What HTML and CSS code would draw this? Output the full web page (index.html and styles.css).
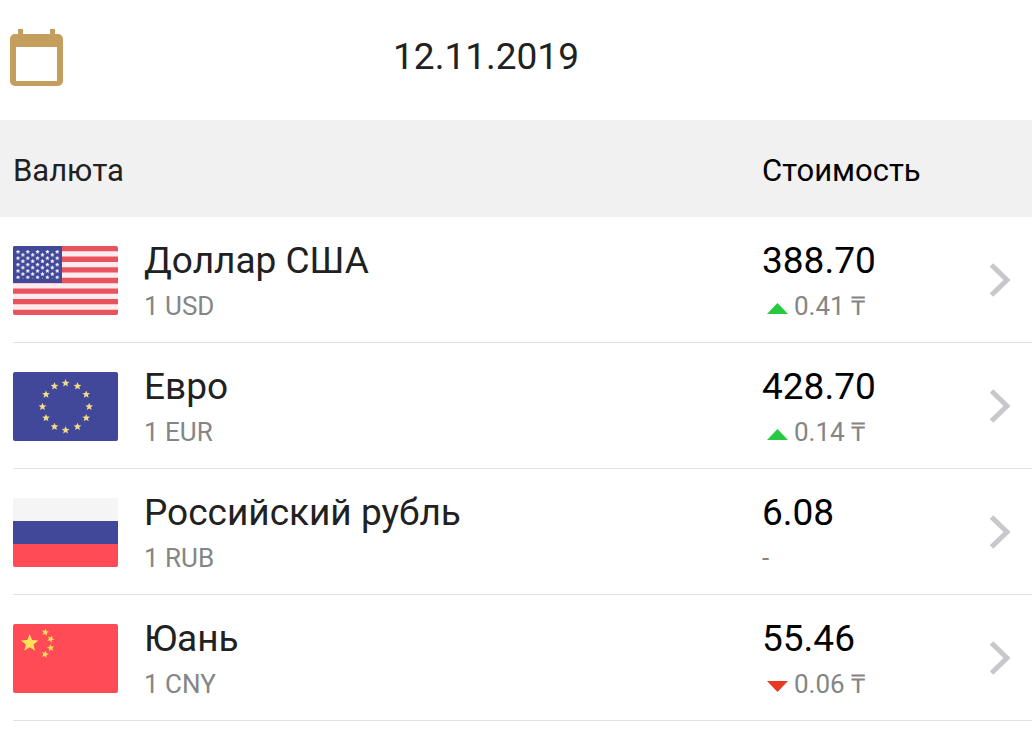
FILE: index.html
```html
<!DOCTYPE html>
<html lang="ru">
<head>
  <meta charset="UTF-8" />
  <meta name="viewport" content="width=device-width, initial-scale=1.0"/>
  <title>12.11.2019</title>
  <link rel="stylesheet" href="styles.css">
</head>
<body>

  <!-- shared shapes -->
  <svg class="defs" aria-hidden="true">
    <defs>
      <path id="star" d="M0-10 2.6-3.5 9.5-3.1 4.1 1.3 5.9 8.1 0 4.3-5.9 8.1-4.1 1.3-9.5-3.1-2.6-3.5z"/>
      <pattern id="usStars" x="2.6" y="4.1" width="9.8" height="6.4" patternUnits="userSpaceOnUse">
        <use href="#star" transform="translate(2.4 1.6) scale(.24)" fill="#fff"/>
        <use href="#star" transform="translate(7.3 4.8) scale(.24)" fill="#fff"/>
      </pattern>
    </defs>
  </svg>

  <!-- DATE BAR -->
  <header class="topbar">
    <button class="calendar" type="button" aria-label="Календарь">
      <svg width="53" height="58" viewBox="0 0 53 58">
        <path fill="#c49e5c" fill-rule="evenodd" d="M8 0h5v5h27V0h5v5h3a5 5 0 0 1 5 5v42a5 5 0 0 1-5 5H5a5 5 0 0 1-5-5V10a5 5 0 0 1 5-5h3zM6 18v34h41V18z"/>
      </svg>
    </button>
    <h1 class="date">12.11.2019</h1>
  </header>

  <!-- RATES -->
  <main class="rates-wrap">
    <table class="rates">
      <thead>
        <tr>
          <th class="first" colspan="2" scope="col">Валюта</th>
          <th class="cost-head" colspan="2" scope="col">Стоимость</th>
        </tr>
      </thead>
      <tbody>
        <tr>
          <td class="flag-cell">
            <svg class="flag" viewBox="0 0 105 69" aria-hidden="true">
              <rect width="105" height="69" fill="#ffecee"/>
              <path stroke="#e9535e" stroke-width="5.3" d="M0 2.65h105M0 13.25h105M0 23.9h105M0 34.5h105M0 45.1h105M0 55.7h105M0 66.35h105"/>
              <rect width="49" height="37" fill="#414799"/>
              <rect x="2.6" y="4.1" width="44.1" height="28.8" fill="url(#usStars)"/>
            </svg>
          </td>
          <td class="name-cell">
            <div class="name">Доллар США</div>
            <div class="sub">1 USD</div>
          </td>
          <td class="cost-cell">
            <div class="cost">388.70</div>
            <div class="sub"><svg class="arrow up" viewBox="0 0 21 11"><path d="M0 11 10.5 0 21 11z"/></svg>0.41 ₸</div>
          </td>
          <td class="more-cell">
            <a href="#usd" aria-label="Доллар США"><svg class="chevron" viewBox="0 0 22 34"><path d="M2.5 2 18 17 2.5 32"/></svg></a>
          </td>
        </tr>
        <tr>
          <td class="flag-cell">
            <svg class="flag" viewBox="0 0 105 69" aria-hidden="true">
              <rect width="105" height="69" fill="#414799"/>
              <g fill="#f3dc84">
                <use href="#star" transform="translate(52.6 11.2) scale(.41)"/>
                <use href="#star" transform="translate(64.5 14.2) scale(.41)"/>
                <use href="#star" transform="translate(73.2 22.5) scale(.41)"/>
                <use href="#star" transform="translate(76.2 34.8) scale(.41)"/>
                <use href="#star" transform="translate(73.2 46) scale(.41)"/>
                <use href="#star" transform="translate(64.5 54.8) scale(.41)"/>
                <use href="#star" transform="translate(52.6 58.2) scale(.41)"/>
                <use href="#star" transform="translate(41.5 54.8) scale(.41)"/>
                <use href="#star" transform="translate(33 46) scale(.41)"/>
                <use href="#star" transform="translate(29.5 34.8) scale(.41)"/>
                <use href="#star" transform="translate(33 22.5) scale(.41)"/>
                <use href="#star" transform="translate(41.5 14.2) scale(.41)"/>
              </g>
            </svg>
          </td>
          <td class="name-cell">
            <div class="name">Евро</div>
            <div class="sub">1 EUR</div>
          </td>
          <td class="cost-cell">
            <div class="cost">428.70</div>
            <div class="sub"><svg class="arrow up" viewBox="0 0 21 11"><path d="M0 11 10.5 0 21 11z"/></svg>0.14 ₸</div>
          </td>
          <td class="more-cell">
            <a href="#eur" aria-label="Евро"><svg class="chevron" viewBox="0 0 22 34"><path d="M2.5 2 18 17 2.5 32"/></svg></a>
          </td>
        </tr>
        <tr>
          <td class="flag-cell">
            <svg class="flag" viewBox="0 0 105 69" aria-hidden="true">
              <rect width="105" height="23" fill="#f5f5f5"/>
              <rect y="23" width="105" height="23" fill="#414799"/>
              <rect y="46" width="105" height="23" fill="#ff4b55"/>
            </svg>
          </td>
          <td class="name-cell">
            <div class="name">Российский рубль</div>
            <div class="sub">1 RUB</div>
          </td>
          <td class="cost-cell">
            <div class="cost">6.08</div>
            <div class="sub">-</div>
          </td>
          <td class="more-cell">
            <a href="#rub" aria-label="Российский рубль"><svg class="chevron" viewBox="0 0 22 34"><path d="M2.5 2 18 17 2.5 32"/></svg></a>
          </td>
        </tr>
        <tr>
          <td class="flag-cell">
            <svg class="flag" viewBox="0 0 105 69" aria-hidden="true">
              <rect width="105" height="69" fill="#ff4b55"/>
              <g fill="#ffe15a">
                <use href="#star" transform="translate(16.7 19.3) scale(.92)"/>
                <use href="#star" transform="translate(32.3 8.3) rotate(10) scale(.38)"/>
                <use href="#star" transform="translate(37.7 15) rotate(25) scale(.38)"/>
                <use href="#star" transform="translate(37.7 24) rotate(-10) scale(.38)"/>
                <use href="#star" transform="translate(32 30.3) rotate(15) scale(.38)"/>
              </g>
            </svg>
          </td>
          <td class="name-cell">
            <div class="name">Юань</div>
            <div class="sub">1 CNY</div>
          </td>
          <td class="cost-cell">
            <div class="cost">55.46</div>
            <div class="sub"><svg class="arrow down" viewBox="0 0 21 11"><path d="M0 0h21L10.5 11z"/></svg>0.06 ₸</div>
          </td>
          <td class="more-cell">
            <a href="#cny" aria-label="Юань"><svg class="chevron" viewBox="0 0 22 34"><path d="M2.5 2 18 17 2.5 32"/></svg></a>
          </td>
        </tr>
      </tbody>
    </table>
  </main>

</body>
</html>
```
FILE: styles.css
```css
body {
  font-family: Roboto, "Liberation Sans", sans-serif;
  background: #fff;
  color: #212121;
  margin: 0;
}
.defs {
  position: absolute;
  width: 0;
  height: 0;
}
.topbar {
  display: grid;
  grid-template-columns: 53px 1fr 53px;
  align-items: center;
  padding: 27px 70px 31px 10px;
}
.calendar {
  border: none;
  background: none;
  padding: 2px 0;
  cursor: pointer;
}
.calendar svg {
  display: block;
}
.date {
  margin: 0;
  font-size: 37px;
  font-weight: 400;
  line-height: 45px;
  text-align: center;
  padding-bottom: 4px;
}
.rates-wrap {
  padding-left: 13px;
  overflow: hidden;
}
.rates {
  width: 100%;
  border-spacing: 0;
}
.rates th {
  padding: 31px 0 26px;
  background: #f1f1f1;
  font-size: 31px;
  font-weight: 400;
  line-height: 40px;
  text-align: left;
}
.rates .first {
  box-shadow: -13px 0 0 #f1f1f1;
}
.rates td {
  padding: 21px 0 12px;
  border-bottom: 1px solid #e2e2e2;
}
.rates .flag-cell {
  width: 131px;
  padding: 2px 0 0;
}
.flag {
  display: block;
  width: 105px;
  height: 69px;
  border-radius: 2px;
}
.name,
.cost {
  font-size: 37px;
  line-height: 45px;
}
.cost,
.cost-head {
  color: #000;
}
.sub {
  color: #858585;
  font-size: 26px;
  line-height: 47px;
}
.rates .cost-cell {
  width: 227px;
}
.arrow {
  width: 21px;
  height: 11px;
  margin: 0 6px 1px 5px;
}
.up {
  fill: #26c940;
}
.down {
  fill: #e63a22;
}
.rates .more-cell {
  width: 43px;
  padding: 0;
}
.more-cell a {
  display: block;
}
.chevron {
  display: block;
  width: 22px;
  height: 34px;
  fill: none;
  stroke: #c7c7cc;
  stroke-width: 5px;
}
```
